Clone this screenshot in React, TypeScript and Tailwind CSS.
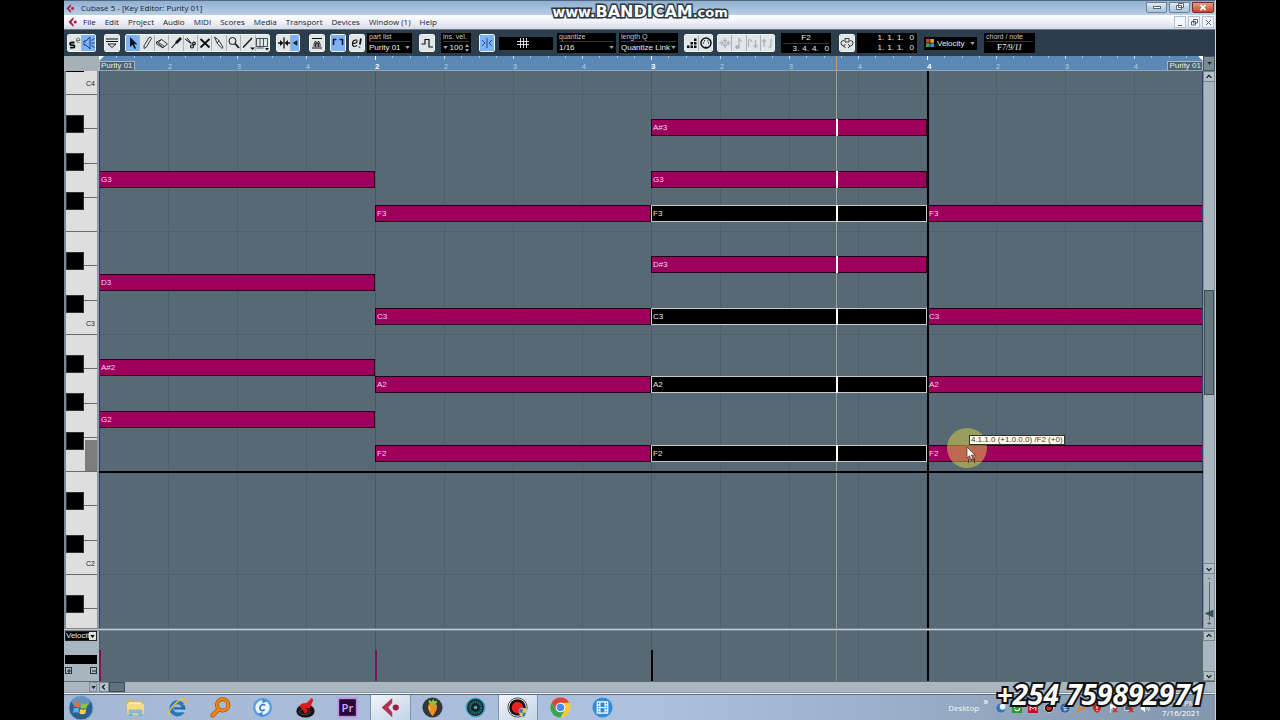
import React, { useState } from 'react'
import clsx from 'clsx'

// ---------------------------------------------------------------- data

interface Note {
  name: string
  // half rows counted down from F3, a white key is two half rows high
  row: number
  bar: number
  selected?: boolean
}

const NOTES: Note[] = [
  { name: 'G3', row: -2, bar: 0 },
  { name: 'D3', row: 4, bar: 0 },
  { name: 'A#2', row: 9, bar: 0 },
  { name: 'G2', row: 12, bar: 0 },
  { name: 'F3', row: 0, bar: 1 },
  { name: 'C3', row: 6, bar: 1 },
  { name: 'A2', row: 10, bar: 1 },
  { name: 'F2', row: 14, bar: 1 },
  { name: 'A#3', row: -5, bar: 2 },
  { name: 'G3', row: -2, bar: 2 },
  { name: 'F3', row: 0, bar: 2, selected: true },
  { name: 'D#3', row: 3, bar: 2 },
  { name: 'C3', row: 6, bar: 2, selected: true },
  { name: 'A2', row: 10, bar: 2, selected: true },
  { name: 'F2', row: 14, bar: 2, selected: true },
  { name: 'F3', row: 0, bar: 3 },
  { name: 'C3', row: 6, bar: 3 },
  { name: 'A2', row: 10, bar: 3 },
  { name: 'F2', row: 14, bar: 3 }
]

const MENUS = ['File', 'Edit', 'Project', 'Audio', 'MIDI', 'Scores', 'Media', 'Transport', 'Devices', 'Window (1)', 'Help']
const BEATS = Array.from({ length: 16 }, (_, i) => i)
const OCTAVE = 240
const PLAYHEAD = '66.8%'

const noteTop = (row: number) => Math.round(134 + (row * OCTAVE) / 14)

// white keys from C4 downwards
const WHITE_KEYS = ['C4', 'B3', 'A3', 'G3', 'F3', 'E3', 'D3', 'C3', 'B2', 'A2', 'G2', 'F2', 'E2', 'D2', 'C2', 'B1', 'A1']
const keyBottom = (i: number) => Math.round(24 + (i * OCTAVE) / 7)
const BLACK_KEYS = [44, 82, 121, 181, 224]

// ---------------------------------------------------------------- toolbar parts

interface ToolProps {
  label: string
  active?: boolean
  dim?: boolean
  narrow?: boolean
  children: React.ReactNode
}

function Tool({ label, active, dim, narrow, children }: ToolProps) {
  return (
    <button
      aria-label={label}
      className={clsx(
        'h-full flex items-center justify-center border-r border-[#a8b3ba] last:border-r-0',
        narrow ? 'w-2' : 'min-w-0 flex-1',
        active ? 'bg-[#7db3f5]' : 'bg-[#dfe6e8]',
        dim ? 'text-[#a9b1b6]' : 'text-[#111]'
      )}
    >
      <svg viewBox="0 0 14 16" className={clsx('h-4 shrink-0', narrow ? 'w-2' : 'w-3.5')} fill="none" stroke="currentColor" strokeWidth="1.2">
        {children}
      </svg>
    </button>
  )
}

function Group({ className, children }: { className: string; children: React.ReactNode }) {
  return <div className={clsx('h-[18px] shrink-0 flex overflow-hidden rounded-[2px] border border-[#eef3f5]', className)}>{children}</div>
}

function Divider() {
  return <span className="h-6 w-px shrink-0 bg-[#45586a]" />
}

function Caption({ children }: { children: React.ReactNode }) {
  return <span className="block border-b border-[#30393f] text-[7px] leading-[8px] text-[#c3c9cc]">{children}</span>
}

function Dropdown({ label, value, className }: { label: string; value: string; className: string }) {
  return (
    <label className={clsx('h-5 shrink-0 bg-black px-[2px] block', className)}>
      <Caption>{label}</Caption>
      <span className="flex items-center">
        <select defaultValue={value} className="h-[11px] min-w-0 flex-1 appearance-none bg-black text-[8px] leading-[11px] text-[#e8ecee]">
          <option>{value}</option>
        </select>
        <Caret />
      </span>
    </label>
  )
}

function Caret({ className = 'text-[#9aa3a8]' }: { className?: string }) {
  return (
    <svg viewBox="0 0 6 4" className={clsx('h-[3px] w-[5px] shrink-0', className)} fill="currentColor">
      <path d="M0 0h6L3 4z" />
    </svg>
  )
}

function Toolbar() {
  return (
    <div className="h-[27px] shrink-0 overflow-hidden bg-[#2c3d4b] border-t border-[#6c7680] flex items-center pl-[3px]">
      <Group className="w-[29px]">
        <Tool label="Solo editor">
          <path d="M6.500 7.500H3.500q-1.500 0-1.500 1.300t1.500 1.300h1.500q1.500 0 1.500 1.300t-1.500 1.300H2" strokeWidth="1.800" />
          <path d="M8.500 5.500h3.500q0-2.500-1.800-2.500T8.500 5.200q0 2.300 2 2.300h1" strokeWidth=".8" stroke="#555" />
        </Tool>
        <Tool label="Acoustic feedback" active>
          <path d="M2 6v4h2l4 4V2L4 6z M9.500 8h3 M9.500 5.500l3-2 M9.500 10.500l3 2" stroke="#1c3f78" strokeWidth="1" />
        </Tool>
      </Group>
      <Group className="ml-[8px] w-4">
        <Tool label="Show info">
          <path d="M1 4h12M1 6.500h12" strokeWidth="1" />
          <path d="M3 9h8l-4 3.500z" strokeWidth=".9" />
        </Tool>
      </Group>
      <div className="ml-[4px]"><Divider /></div>
      <Group className="ml-px w-[145px]">
        <Tool label="Object selection" active>
          <path d="M4 2v10l2.500-2.200L8.500 14l1.500-.8-2-4h3.300z" fill="#08142a" stroke="none" />
        </Tool>
        <Tool label="Draw">
          <path d="M9 2.500q2-1 2.500.8L6.500 12 4 13.500l.2-3z" strokeWidth=".8" />
        </Tool>
        <Tool label="Erase">
          <path d="M1.500 7l5-2.500 6 4.500-4.500 3.500zM1.500 7v2L8 13v-1M6.500 4.500l-3 3 6 4" strokeWidth=".8" />
        </Tool>
        <Tool label="Trim">
          <path d="M2.500 13L8 7" strokeWidth="1.100" />
          <path d="M7 8l5-5" strokeWidth="2.600" />
        </Tool>
        <Tool label="Split">
          <path d="M2 4l6 4.500M4 3l4.500 5.500" strokeWidth="1" />
          <circle cx="9" cy="11.500" r="1.500" />
          <circle cx="11" cy="8.500" r="1.300" />
        </Tool>
        <Tool label="Mute">
          <path d="M2.500 4l9 8.500M11.500 4l-9 8.500" strokeWidth="1.900" />
        </Tool>
        <Tool label="Glue">
          <path d="M2.500 2l4 3 4.500 7-1 1.500L5 8zM5 8l2-2" strokeWidth=".8" />
        </Tool>
        <Tool label="Zoom">
          <circle cx="5.500" cy="6" r="3.500" strokeWidth="1" />
          <path d="M8 8.500l4 4.500" strokeWidth="1.800" />
        </Tool>
        <Tool label="Line">
          <path d="M2 12.500L11 3" strokeWidth="1.300" />
          <path d="M9 12.500h5l-2.500 2.500z" fill="currentColor" stroke="none" />
        </Tool>
        <Tool label="Time warp">
          <path d="M1.500 3.500h11v8h-11zM5 3.500v8M8.500 3.500v8M1.500 13h7" strokeWidth=".7" />
          <path d="M10 13h4l-2 2.500z" fill="currentColor" stroke="none" />
        </Tool>
      </Group>
      <div className="ml-[3px]"><Divider /></div>
      <Group className="ml-[3px] w-6">
        <Tool label="Autoscroll">
          <path d="M1 8h4M9 8h4M7 2.500v11" strokeWidth="1.300" />
          <path d="M3 5l3.500 3L3 11zM11 5L7.500 8l3.500 3z" fill="currentColor" stroke="none" />
        </Tool>
        <Tool label="Suspend autoscroll" active narrow>
          <path d="M11 3v10L3 8z" fill="#123" stroke="none" />
        </Tool>
      </Group>
      <div className="ml-[4px]"><Divider /></div>
      <Group className="ml-[5px] w-4">
        <Tool label="Show part borders">
          <path d="M2 3.500h10M2 13h10" strokeWidth="1" />
          <path d="M4 12V9l1.500-3L7 9l1.500-3L10 9v3M5.500 12V8M8.500 12V8M7 12V9" strokeWidth=".9" />
        </Tool>
      </Group>
      <div className="ml-[3px]"><Divider /></div>
      <Group className="ml-[2px] w-4">
        <Tool label="Part borders" active>
          <path d="M2.500 10V4.500h3M11.500 10V4.500h-3" strokeWidth="1.500" />
        </Tool>
      </Group>
      <Group className="ml-[3px] w-4">
        <Tool label="Edit active part only">
          <path d="M2 8.500q5 0 5-2T5.500 5Q3 5 2.500 8t2 3.500q1.500 0 2.500-1.500" strokeWidth="1.100" />
          <path d="M11 3.500L9.800 9.500M9.400 11.500v1" strokeWidth="1.800" />
        </Tool>
      </Group>
      <Dropdown label="part list" value="Purity 01" className="ml-[2px] w-[45px]" />
      <Group className="ml-[7px] w-4">
        <Tool label="Insert velocity">
          <path d="M1.500 9H5V4.500h4V12h4" strokeWidth="1.200" />
        </Tool>
      </Group>
      <div className="ml-[3px]"><Divider /></div>
      <div className="ml-[3px] h-5 w-[30px] shrink-0 bg-black px-[2px]">
        <Caption>ins. vel.</Caption>
        <label className="flex items-center justify-between text-[8px] leading-[11px] text-[#e8ecee]">
          <Caret />
          <input aria-label="Insert velocity" defaultValue="100" className="h-[11px] w-[14px] bg-black" />
          <svg viewBox="0 0 4 8" className="h-2 w-1 shrink-0" fill="#9aa3a8">
            <path d="M2 0l2 3H0zM0 5h4L2 8z" />
          </svg>
        </label>
      </div>
      <div className="ml-[3px]"><Divider /></div>
      <Group className="ml-[5px] w-4">
        <Tool label="Snap" active>
          <path d="M7 3v10M2 5l3 3-3 3M12 5L9 8l3 3" strokeWidth=".9" stroke="#173a70" />
        </Tool>
      </Group>
      <button aria-label="Snap type" className="ml-[4px] flex h-[13px] w-[54px] shrink-0 items-center justify-center bg-black">
        <svg viewBox="0 0 12 10" className="mr-[6px] h-[10px] w-3" stroke="#e8ecee" fill="none">
          <path d="M3.500 0v10M6.500 0v10M9.500 0v10M0 3.500h12M0 6.500h12" strokeWidth=".9" />
        </svg>
      </button>
      <Dropdown label="quantize" value="1/16" className="ml-[4px] w-[59px]" />
      <Dropdown label="length Q" value="Quantize Link" className="ml-[3px] w-[59px]" />
      <div className="ml-[3px]"><Divider /></div>
      <Group className="ml-[3px] w-[29px]">
        <Tool label="Step input">
          <path d="M2 10.500h2.500V13H2zM5.500 10.500H8V13H5.500zM9 10.500h2.500V13H9zM5.500 7H8v2.500H5.500zM9 7h2.500v2.500H9zM9 3.500h2.500V6H9z" fill="currentColor" stroke="none" />
        </Tool>
        <Tool label="MIDI input">
          <circle cx="7" cy="8" r="5" strokeWidth="1.500" />
          <path d="M4 8h.8M5 5.800h.8M8.500 5.800h.8M9.300 8h.8M5.500 12.500h3" strokeWidth="1.400" />
        </Tool>
      </Group>
      <Group className="ml-[4px] w-[58px]">
        <Tool label="Move" dim>
          <path d="M7 3v10M1 8h4M9 8h4M3 6l2 2-2 2M11 6L9 8l2 2M5 5l2 1.500L9 5M5 11l2-1.500L9 11" />
        </Tool>
        <Tool label="Record pitch" dim>
          <path d="M7 12V3q0 2 3 3.500" />
          <ellipse cx="5.500" cy="12" rx="1.800" ry="1.300" fill="currentColor" />
        </Tool>
        <Tool label="Record note-on" dim>
          <path d="M2.500 12V5q3-1 3.500 2M9.500 5v7M7.500 10l2 2.500L11.500 10" />
        </Tool>
        <Tool label="Record note-off" dim>
          <path d="M4 12V5M2 7l2-2.500L6 7M11 4v7q0 1.500-2.500 1" />
        </Tool>
      </Group>
      <div className="ml-[3px]"><Divider /></div>
      <div className="ml-[3px] h-5 w-[50px] shrink-0 bg-black px-[2px] text-[8px] leading-[10px] text-[#e8ecee]">
        <div className="border-b border-[#30393f] text-center">F2</div>
        <div className="flex justify-end gap-[3px] leading-[9px]"><span>3.</span><span>4.</span><span>4.</span><span className="ml-[3px]">0</span></div>
      </div>
      <div className="ml-[3px]"><Divider /></div>
      <Group className="ml-[5px] w-4">
        <Tool label="Independent loop">
          <path d="M4.500 11H3.500Q1 10.500 1 8t3-2.500M9.500 11h1q2.500-.5 2.500-3t-3-2.500M5 3.500h4v3.500H5zM5.500 13l-2-2 2-2M8 9l2 2-2 2" strokeWidth=".8" />
        </Tool>
      </Group>
      <div className="ml-[2px] h-5 w-[60px] shrink-0 bg-black px-[3px] text-[8px] leading-[10px] text-[#e8ecee]">
        {[0, 1].map((line) => (
          <div key={line} className="flex justify-end gap-[3px]"><span>1.</span><span>1.</span><span>1.</span><span className="ml-[3px]">0</span></div>
        ))}
      </div>
      <div className="ml-[3px]"><Divider /></div>
      <label className="ml-[4px] flex h-[13px] w-[53px] shrink-0 items-center gap-[3px] bg-black px-[2px]">
        <svg viewBox="0 0 8 8" className="h-2 w-2 shrink-0">
          <path d="M0 0h3.700v3.700H0z" fill="#d8392c" />
          <path d="M4.300 0H8v3.700H4.300z" fill="#e0a62c" />
          <path d="M0 4.300h3.700V8H0z" fill="#3ba54a" />
          <path d="M4.300 4.300H8V8H4.300z" fill="#3f8fd6" />
        </svg>
        <select aria-label="Event colors" defaultValue="Velocity" className="min-w-0 flex-1 appearance-none bg-black text-[8px] leading-[11px] text-[#e8ecee]">
          <option>Velocity</option>
        </select>
        <Caret />
      </label>
      <div className="ml-[3px]"><Divider /></div>
      <div className="ml-[4px] h-5 w-[51px] shrink-0 bg-black px-[2px]">
        <Caption>chord / note</Caption>
        <div className="text-center font-['Liberation_Serif',serif] text-[9px] leading-[11px] text-white">
          F<i className="text-[8px]">7/9/11</i>
        </div>
      </div>
    </div>
  )
}

// ---------------------------------------------------------------- window chrome

function CubaseMark({ className }: { className: string }) {
  return (
    <svg viewBox="0 0 20 20" className={className}>
      <path d="M11 0v5L6.500 10l4.500 5v5L1 10z" fill="#a51c3c" />
      <circle cx="14.500" cy="10" r="3.200" fill="#b3193c" />
    </svg>
  )
}

function TitleBar() {
  return (
    <header className="h-[15px] shrink-0 bg-linear-to-b from-[#8fb0d0] to-[#b8cfe6] border-t border-[#53687c] flex items-center pl-[2px]">
      <CubaseMark className="h-[9px] w-[9px]" />
      <h1 className="ml-[6px] flex-1 font-['Open_Sans',sans-serif] text-[8px] leading-[12px] text-[#16202b]">Cubase 5 - [Key Editor: Purity 01]</h1>
      <div className="mr-px mb-[2px] flex gap-[2px]">
        <button aria-label="Minimize" className="flex h-[11px] w-[21px] items-center justify-center rounded-b-[2px] border border-[#6d8197] bg-linear-to-b from-[#dde8f3] to-[#aac1d9]">
          <span className="h-[3px] w-2 border border-[#5b6673] bg-white" />
        </button>
        <button aria-label="Restore" className="flex h-[11px] w-[21px] items-center justify-center rounded-b-[2px] border border-[#6d8197] bg-linear-to-b from-[#dde8f3] to-[#aac1d9]">
          <svg viewBox="0 0 10 8" className="h-2 w-[10px]" fill="#fff" stroke="#5b6673">
            <path d="M3.500.5h5v4h-5zM1.500 2.500h5v4h-5zM3.500 4.500h1" />
          </svg>
        </button>
        <button aria-label="Close" className="flex h-[11px] w-[22px] items-center justify-center rounded-b-[2px] border border-[#7c2c22] bg-linear-to-b from-[#e59a87] to-[#c8402a]">
          <svg viewBox="0 0 8 8" className="h-[7px] w-2" stroke="#fff" strokeWidth="2">
            <path d="M1 1l6 6M7 1L1 7" />
          </svg>
        </button>
      </div>
    </header>
  )
}

function MenuBar() {
  return (
    <nav className="h-[14px] shrink-0 bg-linear-to-b from-white via-[#eef0f8] to-[#d6dbea] flex items-center pl-1">
      <CubaseMark className="h-[10px] w-[10px]" />
      <div className="ml-[5px] flex flex-1 gap-[9px] font-['Open_Sans',sans-serif] text-[8px] leading-[12px] text-[#1a1a1a]">
        {MENUS.map((m) => (
          <button key={m} className="whitespace-nowrap">{m}</button>
        ))}
      </div>
      <div className="flex gap-[2px] pr-px">
        {[
          { name: 'Minimize editor', d: 'M2 7.500h4' },
          { name: 'Restore editor', d: 'M3.500 1.500h4v3.500h-4zM1.500 3.500h4V7h-4z' },
          { name: 'Close editor', d: 'M2 2l5 5M7 2L2 7' }
        ].map((b) => (
          <button key={b.name} aria-label={b.name} className="flex h-3 w-[12px] items-center justify-center border border-[#b3bfd6] bg-[#f3f6fb]">
            <svg viewBox="0 0 9 9" className="h-[9px] w-[9px] shrink-0" fill="none" stroke="#56606e">
              <path d={b.d} />
            </svg>
          </button>
        ))}
      </div>
    </nav>
  )
}

function Arrow({ dir, className }: { dir: 'up' | 'down' | 'left'; className: string }) {
  const d = { up: 'M2 6l3-3 3 3', down: 'M2 4l3 3 3-3', left: 'M6 2L3 5l3 3' }[dir]
  return (
    <button aria-label={`Scroll ${dir}`} className={clsx('shrink-0 flex items-center justify-center border border-[#77858e] bg-[#b4c0c8]', className)}>
      <svg viewBox="0 0 10 10" className="h-2 w-2" fill="none" stroke="#111" strokeWidth="1.500">
        <path d={d} />
      </svg>
    </button>
  )
}

// ---------------------------------------------------------------- editor

function Ruler() {
  return (
    <div className="flex h-[15px] shrink-0">
      <div className="w-[35px] shrink-0 bg-[#a5b0b7]" />
      <div className="relative grid flex-1 grid-cols-16 border-b border-[#9aa5ad] bg-[#5a89b5]">
        {BEATS.map((b) => (
          <div key={b} className="relative grid h-[3px] grid-cols-4">
            <span className={clsx('border-l', b % 4 ? 'border-[#c8d8e6]' : 'h-1 border-white')} />
            <span className="h-0.5 border-l border-[#a9c3da]" />
            <span className="h-0.5 border-l border-[#a9c3da]" />
            <span className="h-0.5 border-l border-[#a9c3da]" />
            {b > 0 && (
              <span className={clsx('absolute top-[6px] left-0', b % 4 ? 'text-[7px] leading-[9px] text-[#bcd0e2]' : 'text-[8px] leading-[9px] font-bold text-white')}>
                {b % 4 ? (b % 4) + 1 : b / 4 + 1}
              </span>
            )}
          </div>
        ))}
        <span className="absolute bottom-0 left-0 border border-b-0 border-[#a9b7c2] bg-[#4d6373] px-px text-[8px] leading-[8px] text-[#e4eaee]">Purity 01</span>
        <span className="absolute right-0 bottom-0 border border-b-0 border-[#a9b7c2] bg-[#4d6373] px-px text-[8px] leading-[8px] text-[#e4eaee]">Purity 01</span>
        <svg viewBox="0 0 5 5" className="absolute top-0 left-0 h-[5px] w-[5px]" fill="#fff"><path d="M0 0h5L0 5z" /></svg>
        <svg viewBox="0 0 5 5" className="absolute top-0 right-0 h-[5px] w-[5px]" fill="#fff"><path d="M0 0h5v5z" /></svg>
        <span className="absolute inset-y-0 w-px bg-[#b59a78]" style={{ left: PLAYHEAD }} />
      </div>
      <button aria-label="Ruler format" className="flex w-3 shrink-0 items-center justify-center border border-[#455560] bg-[#7c8a93]">
        <Caret className="text-[#222c33]" />
      </button>
    </div>
  )
}

function Keyboard() {
  return (
    <div className="relative flex w-[35px] shrink-0 flex-col overflow-hidden border-r-2 border-l-2 border-r-[#8d9aa3] border-l-[#7f8b93] bg-[#dedede]">
      {WHITE_KEYS.map((k, i) => (
        <button
          key={k}
          aria-label={k}
          className="flex shrink-0 items-end justify-end border-b border-[#6a6a6a] pr-[2px] text-[7px] leading-[9px] text-[#222]"
          style={{ height: keyBottom(i) - (i ? keyBottom(i - 1) : 0) }}
        >
          <span className="mb-[6px]">{k[0] === 'C' ? k : ''}</span>
        </button>
      ))}
      {[0, 1, 2].map((o) =>
        BLACK_KEYS.map((y) => (
          <span key={`${o}-${y}`} className="absolute left-0 h-[18px] w-[18px] border border-[#333] bg-black" style={{ top: y + o * OCTAVE }} />
        ))
      )}
      <span className="absolute left-0 top-0 h-px w-[18px] bg-black" />
      <span className="absolute right-0 h-[31px] w-3 bg-[#7c7c7c]" style={{ top: 369 }} />
    </div>
  )
}

function BeatLines() {
  return (
    <div className="grid h-full grid-cols-16">
      {BEATS.map((b) => (
        <span key={b} className={clsx('border-l', b % 4 ? 'border-[#4d5f6b]' : 'border-[#465864]')} />
      ))}
    </div>
  )
}

function NoteGrid() {
  return (
    <div className="relative flex-1 overflow-hidden bg-[#576974]">
      <BeatLines />
      {[23, 160, 263, 503].map((y) => (
        <span key={y} className="absolute inset-x-0 h-px bg-[#4e606c]" style={{ top: y }} />
      ))}
      <span className="absolute inset-y-0 w-px bg-[#a89c90]" style={{ left: PLAYHEAD }} />
      {NOTES.map((n) => (
        <div
          key={`${n.bar}-${n.name}`}
          className={clsx(
            'absolute h-[17px] w-1/4 border pl-px text-[8px] leading-[15px]',
            n.selected ? 'border-[#c5c9cb] bg-black text-[#e8e8e8]' : 'border-[#240014] bg-[#9c005c] text-[#f0d8e6]'
          )}
          style={{ top: noteTop(n.row), left: `${n.bar * 25}%` }}
        >
          {n.name}
          {n.bar === 2 && <span className="absolute -inset-y-px w-0.5 bg-white" style={{ left: '67%' }} />}
        </div>
      ))}
      <span className="absolute inset-y-0 left-0 w-px bg-[#363c78]" />
      <span className="absolute inset-y-0 right-0 w-px bg-[#363c78]" />
      <span className="absolute inset-y-0 left-3/4 w-0.5 bg-black" />
      <span className="absolute inset-x-0 h-0.5 bg-black" style={{ top: 400 }} />

      {/* drag cursor with its position hint */}
      <div className="absolute top-[357px] left-[76.8%] h-10 w-10 rounded-full bg-[#dfd243]/50" />
      <span className="absolute top-[364px] left-[78.8%] border border-[#333] bg-[#fffde8] px-px text-[8px] leading-[8px] whitespace-nowrap text-[#333]">
        4.1.1.0 (+1.0.0.0) /F2 (+0)
      </span>
      <svg viewBox="0 0 12 18" className="absolute top-[376px] left-[78.5%] h-[18px] w-3">
        <path d="M1 0v11l2.500-2.200L5.500 13l1.700-.8-1.800-4H9z" fill="#fff" stroke="#333" strokeWidth=".7" />
        <path d="M2.500 16v-4M8.500 11v5M5 12l3.500 1.500" stroke="#333" strokeWidth=".8" fill="none" />
      </svg>
    </div>
  )
}

function SideScroll() {
  const [zoom, setZoom] = useState(8)
  return (
    <div className="flex w-3 shrink-0 flex-col bg-[#a9b6bf]">
      <Arrow dir="up" className="h-[11px]" />
      <div className="flex flex-1 flex-col border-x border-[#84929b]">
        <div className="flex-208" />
        <div className="flex-104 border border-[#3c4c56] bg-[#667882]" />
        <div className="flex-168" />
      </div>
      <Arrow dir="down" className="h-[11px]" />
      <div className="flex h-[54px] flex-col items-center border-x border-[#84929b] text-[8px] leading-[8px] text-[#222]">
        <span>-</span>
        <input
          type="range"
          aria-label="Vertical zoom"
          value={zoom}
          onChange={(e) => setZoom(Number(e.target.value))}
          className="min-h-0 w-[9px] flex-1 appearance-none bg-linear-to-r from-transparent from-40% via-[#55646e] via-50% to-transparent to-60% [direction:rtl] [writing-mode:vertical-lr] [&::-webkit-slider-thumb]:h-2 [&::-webkit-slider-thumb]:w-[9px] [&::-webkit-slider-thumb]:appearance-none [&::-webkit-slider-thumb]:bg-[#3f4f5a] [&::-webkit-slider-thumb]:[clip-path:polygon(100%_0,100%_100%,0_50%)]"
        />
        <span>+</span>
      </div>
    </div>
  )
}

function VelocityLane() {
  return (
    <div className="flex h-[50px] shrink-0">
      <div className="flex w-[35px] shrink-0 flex-col bg-[#a9b6bf] pr-0.5 pl-px">
        <label className="flex h-[10px] items-center border border-[#222] bg-black">
          <select aria-label="Controller" defaultValue="Velocity" className="min-w-0 flex-1 appearance-none overflow-hidden bg-black text-[8px] leading-[8px] text-[#e8ecee]">
            <option>Velocity</option>
          </select>
          <span className="flex h-2 w-[7px] items-center justify-center bg-[#dde4e8]"><Caret className="text-black" /></span>
        </label>
        <div className="mt-[14px] h-[9px] bg-black" />
        <div className="mt-[3px] flex justify-between">
          {[
            { name: 'Add preset', d: 'M1 3h4M3 1v4' },
            { name: 'Remove preset', d: 'M1 3h4' }
          ].map((b) => (
            <button key={b.name} aria-label={b.name} className="flex h-[7px] w-[7px] items-center justify-center border border-[#333]">
              <svg viewBox="0 0 6 6" className="h-[6px] w-[6px] shrink-0" stroke="#222"><path d={b.d} /></svg>
            </button>
          ))}
        </div>
      </div>
      <div className="relative flex-1 bg-[#576974]">
        <BeatLines />
        <span className="absolute bottom-0 left-0 h-[31px] w-0.5 bg-[#7c1455]" />
        <span className="absolute bottom-0 left-1/4 h-[31px] w-0.5 bg-[#7c1455]" />
        <span className="absolute bottom-0 left-1/2 h-[31px] w-0.5 bg-black" />
        <span className="absolute inset-y-0 left-3/4 w-0.5 bg-black" />
        <span className="absolute inset-y-0 w-px bg-[#8f8c88]" style={{ left: PLAYHEAD }} />
      </div>
      <div className="flex w-3 shrink-0 flex-col justify-between bg-[#a9b6bf]">
        <Arrow dir="up" className="h-[10px]" />
        <Arrow dir="down" className="h-[10px]" />
      </div>
    </div>
  )
}

// ---------------------------------------------------------------- taskbar

const APPS: { name: string; open?: boolean; icon: React.ReactNode }[] = [
  {
    name: 'Explorer',
    icon: (
      <>
        <path d="M2 3h7l2 2h10v15H2z" fill="#d8b95a" />
        <path d="M4 6h15v11H4z" fill="#fbeeb0" />
        <path d="M2 8h20l-1 12H3z" fill="#f2dc86" />
        <path d="M5 21v-6h14v6h-3v-3H8v3z" fill="#7fc4ea" stroke="#4b93c4" strokeWidth=".6" />
      </>
    )
  },
  {
    name: 'Internet Explorer',
    icon: (
      <>
        <circle cx="12" cy="13" r="7" fill="none" stroke="#2478bd" strokeWidth="4.500" />
        <path d="M8 13h12" stroke="#1e6bb2" strokeWidth="2.600" />
        <path d="M13 14.500h9v3h-9z" fill="#abc0dc" />
        <path d="M3 21Q0 17 9 8T22 4q0 3-3 5" fill="none" stroke="#e9c23c" strokeWidth="1.800" />
      </>
    )
  },
  {
    name: 'Search Everything',
    icon: (
      <>
        <circle cx="14.500" cy="9" r="6.500" fill="none" stroke="#a34f08" strokeWidth="4.500" />
        <path d="M10 14l-7 7" stroke="#a34f08" strokeWidth="5" strokeLinecap="round" />
        <circle cx="14.500" cy="9" r="6.500" fill="none" stroke="#f58410" strokeWidth="3" />
        <path d="M10 14l-7 7" stroke="#f58410" strokeWidth="3.500" strokeLinecap="round" />
      </>
    )
  },
  {
    name: 'CCleaner',
    icon: (
      <>
        <circle cx="12" cy="12" r="9.500" fill="#e9f4ff" stroke="#4f9be6" strokeWidth="2.500" />
        <path d="M12 1l5 4-5 2zM12 23l-5-4 5-2z" fill="#3b86dc" />
        <path d="M15 9.500Q12 7.500 10 10t0 5q2 1.500 4.500-.5" fill="none" stroke="#3672c4" strokeWidth="1.800" />
      </>
    )
  },
  {
    name: 'Virtual DJ',
    icon: (
      <>
        <ellipse cx="12" cy="16" rx="10.500" ry="7.500" fill="#1a1414" />
        <ellipse cx="11" cy="17" rx="6" ry="3" fill="none" stroke="#555" />
        <path d="M5 10q3-4 8-3l6-6 2 2-4 10q-3-1-5 1t-4 0z" fill="#e31818" />
        <circle cx="12" cy="16" r="2.500" fill="#d11" />
      </>
    )
  },
  {
    name: 'Premiere Pro',
    icon: (
      <>
        <rect x="1.500" y="1.500" width="21" height="21" fill="#260a35" stroke="#c58aea" strokeWidth="2" />
        <text x="12" y="17" textAnchor="middle" fontSize="13" fontWeight="600" fill="#e2a6ff" fontFamily="Open Sans, sans-serif">Pr</text>
      </>
    )
  },
  {
    name: 'Cubase',
    open: true,
    icon: (
      <>
        <path d="M14 1v5.500L9.500 12l4.500 5.500V23L2 12z" fill="#b03450" />
        <circle cx="18" cy="12" r="3.500" fill="#a8193c" />
      </>
    )
  },
  {
    name: 'FL Studio',
    icon: (
      <>
        <circle cx="12" cy="12" r="11.500" fill="#33373a" />
        <path d="M7 9q5-3 10 0 1 6-5 13-6-7-5-13z" fill="#f08c1c" />
        <path d="M12 10Q6 7 8 3l3 2 2-3 1 3 3-1q1 4-5 6z" fill="#8cc63c" />
        <path d="M9 11v4" stroke="#ffd27a" />
      </>
    )
  },
  {
    name: 'Filmora',
    icon: (
      <>
        <circle cx="12" cy="12" r="10.500" fill="#10242b" stroke="#3aa7bd" strokeWidth="1.800" />
        <circle cx="12" cy="12" r="6.500" fill="none" stroke="#34606b" strokeWidth="3" strokeDasharray="2 .6" />
        <circle cx="12" cy="12" r="2" fill="#5aa" />
      </>
    )
  },
  {
    name: 'Bandicam',
    open: true,
    icon: (
      <>
        <circle cx="12" cy="12" r="11" fill="#fff" stroke="#333" />
        <circle cx="12" cy="12" r="9.500" fill="#111" />
        <circle cx="12" cy="12" r="6.500" fill="#ee2020" />
        <path d="M14 14l4-1.500 4 1.500v4q-1 4-4 5-3-1-4-5z" fill="#e8cc3a" stroke="#ddd" strokeWidth=".8" />
        <path d="M18 13v5h-4v-4zM18 18h4q-1 4-4 5z" fill="#3a76c4" />
      </>
    )
  },
  {
    name: 'Chrome',
    icon: (
      <>
        <circle cx="12" cy="12" r="11.500" fill="#fbcb32" />
        <path d="M12 6.500h10A11.500 11.500 0 002 6.200L7 15z" fill="#e0443a" />
        <path d="M2 6.200l5 8.800 5 2.500 4.500-2L12 23.500A11.500 11.500 0 012 6.200z" fill="#35a456" />
        <circle cx="12" cy="12" r="5.500" fill="#fff" />
        <circle cx="12" cy="12" r="4.300" fill="#4a8af0" />
      </>
    )
  },
  {
    name: 'Movie Maker',
    icon: (
      <>
        <circle cx="12" cy="12" r="11.500" fill="#2f8bdc" />
        <path d="M6 5.500h12v13H6zM9 5.500v13M15 5.500v13M9 12h6M6 9h3M6 12h3M6 15h3M15 9h3M15 12h3M15 15h3" fill="none" stroke="#fff" strokeWidth="1.300" />
      </>
    )
  }
]

const TRAY: { name: string; icon: React.ReactNode }[] = [
  { name: 'Moon', icon: <><circle cx="6" cy="6" r="5.500" fill="#2878c8" /><circle cx="8" cy="4.500" r="3.500" fill="#eaf4ff" /></> },
  { name: 'Sync', icon: <><rect width="12" height="12" fill="#18a32e" /><circle cx="6" cy="6" r="3.200" fill="none" stroke="#fff" strokeWidth="1.500" strokeDasharray="8 2" /></> },
  { name: 'McAfee', icon: <><rect width="12" height="12" fill="#c0141c" /><path d="M2.500 9V3.500L6 7l3.500-3.500V9" fill="none" stroke="#fff" strokeWidth="1.200" /></> },
  { name: 'Recorder', icon: <><circle cx="6" cy="6" r="5.500" fill="#111" stroke="#ddd" /><circle cx="6" cy="6" r="3" fill="#e22" /></> },
  { name: 'Network tool', icon: <><circle cx="6" cy="6" r="5.500" fill="#2b5fae" /><path d="M3 5h6M4 8h5M6 2v8" stroke="#cfe3ff" /></> },
  { name: 'Finder', icon: <><circle cx="7" cy="4.500" r="3.200" fill="none" stroke="#f07f12" strokeWidth="1.800" /><path d="M5 7l-4 4" stroke="#f07f12" strokeWidth="2" /></> },
  { name: 'Shield', icon: <><path d="M6 0l5 2v4q-1 4-5 6-4-2-5-6V2z" fill="#d02020" /><path d="M6 3v4M6 8.500v1" stroke="#fff" strokeWidth="1.500" /></> },
  { name: 'Action center', icon: <><path d="M3 1v11M3 2h7v5H3" fill="#fff" stroke="#eee" /><path d="M6 6l5 5M11 6l-5 5" stroke="#d22" strokeWidth="2" /></> },
  { name: 'Network', icon: <><rect x="1" y="2" width="9" height="7" fill="#556" stroke="#ddd" /><path d="M6 6l5 5M11 6l-5 5" stroke="#d22" strokeWidth="2" /></> },
  { name: 'Volume', icon: <><path d="M1 4h2l3-3v10L3 8H1z" fill="#fff" /><path d="M8 4q1.500 2 0 4M10 2.500q2.500 3.500 0 7" fill="none" stroke="#fff" /></> }
]

function Grip() {
  return <span className="h-[22px] w-[6px] shrink-0 bg-[radial-gradient(#5d6f88_40%,transparent_45%)] bg-[size:2px_2px] opacity-70" />
}

function Taskbar() {
  return (
    <footer className="h-[26px] shrink-0 overflow-hidden border-t border-[#5d6d80] bg-linear-to-r from-[#a4b7d3] via-[#adc2df] to-[#8296ac] flex items-center font-['Open_Sans',sans-serif]">
      <button aria-label="Start" className="ml-1 shrink-0">
        <svg viewBox="0 0 26 26" className="h-[26px] w-[26px]">
          <circle cx="13" cy="13" r="12" fill="#2c5f94" stroke="#7fa3c8" />
          <ellipse cx="13" cy="7" rx="9" ry="5.500" fill="#8fb8dc" opacity=".6" />
          <path d="M7 8q3-2 5.500 0l-1 4.500Q9 11 6 12.500z" fill="#ee6a2a" />
          <path d="M13.500 8.500q3 1.500 6 0l-1 4.500q-3 1.500-6 0z" fill="#8ec63f" />
          <path d="M5.800 13.500q3-1.500 5.500 0l-1 4.500q-3-1.500-5.500 0z" fill="#4fb0ea" />
          <path d="M12.300 14q3 1.500 6 0l-1 4.500q-3 1.500-6 0z" fill="#fbd03c" />
        </svg>
      </button>
      <span className="ml-2 flex"><Grip /></span>
      <div className="ml-[7px] grid h-full w-[508px] grid-cols-12 gap-[2px]">
        {APPS.map((a) => (
          <button
            key={a.name}
            aria-label={a.name}
            className={clsx(
              'flex h-full items-center justify-center',
              a.open && 'border-x border-[#7f92ad] bg-linear-to-br from-[#f0f5fb] to-[#c3d3e6]'
            )}
          >
            <svg viewBox="0 0 24 24" className="h-[21px] w-[21px]">{a.icon}</svg>
          </button>
        ))}
      </div>
      <div className="ml-auto flex shrink-0 items-center text-[8px] leading-[10px] text-white">
        <Grip />
        <span className="ml-[6px] text-[#f2f6fa]">Desktop</span>
        <button aria-label="More" className="mr-[8px] mb-[14px] ml-[4px] text-[10px]">»</button>
        <div className="flex gap-[6px]">
          {TRAY.map((t) => (
            <button key={t.name} aria-label={t.name}>
              <svg viewBox="0 0 12 12" className="h-[10px] w-[10px]">{t.icon}</svg>
            </button>
          ))}
        </div>
        <div className="mr-[15px] ml-[12px] pt-px text-center">
          <div>3:22 PM</div>
          <div>7/16/2021</div>
        </div>
      </div>
    </footer>
  )
}

// ---------------------------------------------------------------- page

export default function App() {
  return (
    <div className="relative h-screen bg-black px-16 font-['Liberation_Sans',Arial,sans-serif]">
      <main className="flex h-full flex-col overflow-hidden border-r border-[#c8d2dc] bg-[#a9b6bf]">
        <TitleBar />
        <MenuBar />
        <Toolbar />
        <Ruler />
        <div className="flex min-h-0 flex-1">
          <Keyboard />
          <NoteGrid />
          <SideScroll />
        </div>
        <div className="h-[3px] shrink-0 border-y border-[#7a8790] bg-[#c3ccd2]" />
        <VelocityLane />
        <div className="flex h-[11px] shrink-0 border-t border-[#5d6b74] bg-[#a9b6bf]">
          <div className="flex w-[35px] justify-end pr-[2px]">
            <button aria-label="Lane menu" className="flex w-2 items-center justify-center border border-[#84929b]"><Caret className="text-[#222]" /></button>
          </div>
          <Arrow dir="left" className="w-[10px]" />
          <div className="w-4 border border-[#3c4c56] bg-[#5f727d]" />
        </div>
        <div className="h-[2px] shrink-0 border-b border-[#eef2f5] bg-[#8a98a3]" />
        <Taskbar />
      </main>

      <div className="absolute top-[2px] left-1/2 -translate-x-1/2 font-['DejaVu_Sans',sans-serif] text-[16px] leading-[20px] font-bold whitespace-nowrap text-white [-webkit-text-stroke:3px_#2c3640] [paint-order:stroke_fill]">
        <span className="text-[14px]">www.</span>BANDICAM<span className="text-[13px]">.com</span>
      </div>
      <div className="absolute right-[75px] bottom-[8px] font-['Open_Sans',sans-serif] text-[28px] leading-[36px] font-bold whitespace-nowrap text-white italic [-webkit-text-stroke:4px_#111] [paint-order:stroke_fill]">
        +254 759892971
      </div>
    </div>
  )
}
